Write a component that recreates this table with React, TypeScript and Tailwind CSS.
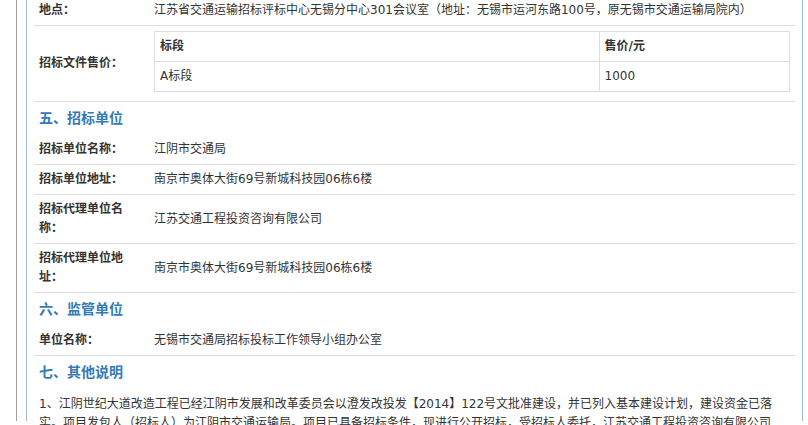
import React from "react";

const font = "font-['DejaVu_Sans','Noto_Sans_CJK_SC',sans-serif]";

function Row({ label, children, extra = "" }: { label: string; children: React.ReactNode; extra?: string }) {
  return (
    <div className="flex items-center border-b border-[#dddddd]">
      <div className="w-[115px] shrink-0 px-[5px] py-[5px] font-bold text-[#333333]">{label}</div>
      <div className={`flex-1 px-[5px] py-[5px] text-[#333333] ${extra}`}>{children}</div>
    </div>
  );
}

function Heading({ children }: { children: React.ReactNode }) {
  return (
    <div className="px-[5px] py-[7px] text-[14px] font-bold text-[#337ab7]">{children}</div>
  );
}

export default function App() {
  return (
    <div className={`h-[425px] w-[808px] overflow-hidden bg-white ${font} text-[12px] leading-[19px]`}>
      <div className="ml-[16px] h-full border-l border-[#a0a0a0]">
        <div className="ml-[9px] h-full w-[777px] border-x border-[#9ebcec] px-[7px]">
          <div className="-mt-[4px]">
            <Row label="地点：">
              江苏省交通运输招标评标中心无锡分中心301会议室（地址：无锡市运河东路100号，原无锡市交通运输局院内）
            </Row>
            <div className="flex items-center border-b border-[#dddddd]">
              <div className="w-[115px] shrink-0 px-[5px] py-[5px] font-bold text-[#333333]">招标文件售价：</div>
              <div className="flex-1 px-[5px] pt-[5px] pb-[9px] text-[#333333]">
                <table className="w-full border-collapse border border-[#dddddd]">
                  <tbody>
                    <tr>
                      <td className="w-[70%] border border-[#dddddd] px-[5px] py-[5px] font-bold">标段</td>
                      <td className="border border-[#dddddd] px-[5px] py-[5px] font-bold">售价/元</td>
                    </tr>
                    <tr>
                      <td className="border border-[#dddddd] px-[5px] py-[5px]">A标段</td>
                      <td className="border border-[#dddddd] px-[5px] py-[5px]">1000</td>
                    </tr>
                  </tbody>
                </table>
              </div>
            </div>
            <Heading>五、招标单位</Heading>
            <Row label="招标单位名称：">江阴市交通局</Row>
            <Row label="招标单位地址：">南京市奥体大街69号新城科技园06栋6楼</Row>
            <Row label="招标代理单位名称：">江苏交通工程投资咨询有限公司</Row>
            <Row label="招标代理单位地址：">南京市奥体大街69号新城科技园06栋6楼</Row>
            <Heading>六、监管单位</Heading>
            <Row label="单位名称：">无锡市交通局招标投标工作领导小组办公室</Row>
            <Heading>七、其他说明</Heading>
            <p className="px-[5px] pt-[6px] text-[#333333]">
              1、江阴世纪大道改造工程已经江阴市发展和改革委员会以澄发改投发【2014】122号文批准建设，并已列入基本建设计划，建设资金已落实。项目发包人（招标人）为江阴市交通运输局。项目已具备招标条件，现进行公开招标，受招标人委托，江苏交通工程投资咨询有限公司
            </p>
          </div>
        </div>
      </div>
    </div>
  );
}
